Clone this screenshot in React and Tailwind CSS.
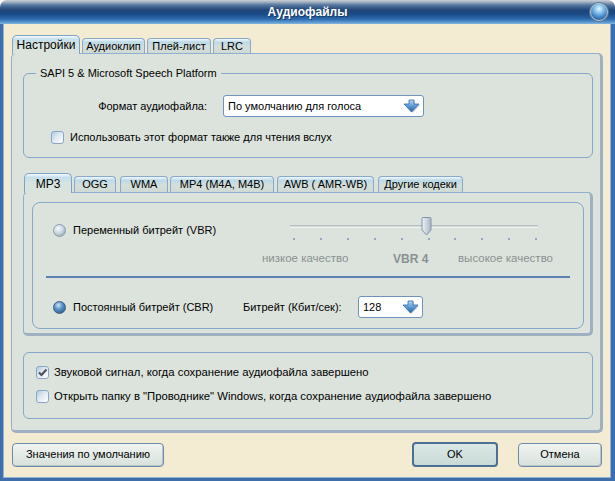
import React from 'react';

const SANS = "font-['Liberation_Sans',Arial,sans-serif]";
const NARROW = "font-['Liberation_Sans_Narrow','Arial_Narrow','Liberation_Sans',sans-serif]";

function DropArrow() {
  return (
    <svg width="17" height="14" viewBox="0 0 17 14">
      <defs>
        <linearGradient id="da" x1="0" y1="0" x2="0" y2="1">
          <stop offset="0" stopColor="#b9dcf7" />
          <stop offset="0.5" stopColor="#5d9ad6" />
          <stop offset="1" stopColor="#2a5f9e" />
        </linearGradient>
      </defs>
      <polygon points="6,1 11,1 11,5 16,5 8.5,13 1,5 6,5" fill="#6b7d8e" opacity="0.35" transform="translate(1,1)" />
      <polygon points="6,1 11,1 11,5 16,5 8.5,13 1,5 6,5" fill="url(#da)" stroke="#2f6aa8" strokeWidth="0.8" />
    </svg>
  );
}

function Select({ value, className }) {
  return (
    <div className={`flex items-center h-[22px] bg-white border border-[#6f93bd] rounded-[3px] pl-[4px] pr-[3px] ${className}`}>
      <span className="flex-1 truncate">{value}</span>
      <DropArrow />
    </div>
  );
}

function Checkbox({ checked }) {
  return (
    <span className="flex shrink-0 items-center justify-center w-[13px] h-[13px] rounded-[3px] border border-[#8aa6c6] bg-[linear-gradient(135deg,#b3cbe2_0%,#dfe9f2_45%,#ffffff_100%)]">
      {checked && (
        <svg width="11" height="11" viewBox="0 0 11 11">
          <path d="M2 5.5 L4.5 8 L9.5 2.5" fill="none" stroke="#4a4f55" strokeWidth="2" />
        </svg>
      )}
    </span>
  );
}

function Radio({ checked }) {
  return checked ? (
    <span className="shrink-0 w-[13px] h-[13px] rounded-full border border-[#3d5d7e] bg-[radial-gradient(circle_at_40%_30%,#cde6f8_0%,#5a93c6_40%,#22507c_100%)]" />
  ) : (
    <span className="shrink-0 w-[13px] h-[13px] rounded-full border border-[#8a9daf] bg-[radial-gradient(circle_at_38%_32%,#f7fafb_0%,#cdd8e0_45%,#8094a7_100%)]" />
  );
}

function Tab({ label, active, className }) {
  return active ? (
    <div
      className={`relative z-10 -mb-px flex items-center justify-center border border-b-0 border-[#7fa3c8] rounded-t-[5px] bg-[linear-gradient(to_bottom,#f6fbfd_0%,#c4dfec_18%,#d6e3e0_45%,#dce3dc_100%)] ${className}`}
    >
      {label}
    </div>
  ) : (
    <div
      className={`flex items-center justify-center border border-b-0 border-[#8aa9c9] rounded-t-[4px] bg-[linear-gradient(to_bottom,#f2f9fc_0%,#bcd9e8_22%,#d4dfdb_55%,#d0dad5_100%)] ${className}`}
    >
      {label}
    </div>
  );
}

function Button({ children, className, focused }) {
  return focused ? (
    <div
      className={`flex items-center justify-center h-[25px] border-2 border-[#4c6f94] rounded-[4px] bg-[linear-gradient(to_bottom,#dbe8e6,#c9dad7)] ${className}`}
    >
      {children}
    </div>
  ) : (
    <div
      className={`flex items-center justify-center h-[24px] border border-[#6c8bab] rounded-[4px] bg-[linear-gradient(to_bottom,#f0f4f1,#d8e1dc)] shadow-[inset_-1px_-1px_0_#b8c6c8] ${className}`}
    >
      {children}
    </div>
  );
}

function Slider() {
  const ticks = Array.from({ length: 10 }, (_, i) => 5 + i * 26.9);
  return (
    <div className="relative w-[252px] h-[30px]">
      <div className="absolute left-[2px] right-[2px] top-[10px] h-[3px] bg-[#d2d9d8] border-t border-[#b7c1c4] border-b border-b-[#eef2f1]" />
      {ticks.map((x) => (
        <div
          key={x}
          className="absolute top-[23px] w-[2px] h-[2px] bg-[#93a8bf]"
          style={{ left: Math.round(x) }}
        />
      ))}
      <svg className="absolute left-[133px] top-[2px]" width="11" height="19" viewBox="0 0 11 19">
        <defs>
          <linearGradient id="th" x1="0" y1="0" x2="1" y2="0">
            <stop offset="0" stopColor="#eef3f6" />
            <stop offset="1" stopColor="#a6b6c5" />
          </linearGradient>
        </defs>
        <path d="M1 1.5 Q1 0.5 2 0.5 H9 Q10 0.5 10 1.5 V13 L5.5 18 L1 13 Z" fill="url(#th)" stroke="#8195aa" />
      </svg>
    </div>
  );
}

export default function App() {
  return (
    <div className={`w-[615px] h-[481px] flex flex-col text-[11px] text-black ${SANS}`}>
      {/* Title bar */}
      <div className="relative h-[24px] shrink-0 rounded-t-[7px] bg-[linear-gradient(to_bottom,#c9d0d6_0px,#a2b1c0_2px,#56779e_5px,#1f4679_10px,#1b4a85_14px,#2c69ad_19px,#5795cf_22px,#86b5de_24px)] flex items-center justify-center">
        <span className="text-white font-bold text-[12px] [text-shadow:1px_1px_0_#163a66]">Аудиофайлы</span>
        <span className="absolute right-[7px] top-[3px] w-[18px] h-[18px] rounded-full border border-[#b9c7d2] bg-[radial-gradient(circle_at_50%_30%,#e6f6ff_0%,#8ac4ee_30%,#3a7cc0_65%,#1d4a80_100%)] shadow-[0_0_0_1px_#5a7896]" />
      </div>

      {/* Body */}
      <div className="flex-1 flex flex-col bg-[#f4ecd2] border-l-[3px] border-r-[4px] border-b-[3px] border-[#3f6fab] shadow-[inset_1px_0_0_#8fb2da,inset_-1px_0_0_#8fb2da,inset_0_-1px_0_#8fb2da] pl-[8px] pr-[8px] pt-[11px]">
        {/* Top tabs */}
        <div className="flex items-end gap-[2px] ml-[1px] h-[18px]">
          <Tab active label="Настройки" className="w-[68px] h-[19px] text-[12px]" />
          <Tab label="Аудиоклип" className="w-[63px] h-[15px]" />
          <Tab label="Плей-лист" className="w-[64px] h-[15px]" />
          <Tab label="LRC" className="w-[38px] h-[15px]" />
        </div>

        {/* Main panel */}
        <div className="h-[380px] flex flex-col bg-[#dce3dc] border-l border-t border-[#8fb0d2] border-r-[3px] border-b-[3px] border-r-[#9eb0c2] border-b-[#9eb0c2] rounded-[5px] pl-[11px] pr-[7px]">
          {/* SAPI group */}
          <fieldset className="mt-[11px] border border-[#86a6ca] rounded-[6px] pb-[12px]">
            <legend className="ml-[12px] px-[4px] leading-[16px] text-[11px]">SAPI 5 &amp; Microsoft Speech Platform</legend>
            <div className="flex items-center mt-[14px]">
              <span className="w-[183px] text-right">Формат аудиофайла:</span>
              <Select value="По умолчанию для голоса" className="ml-[16px] w-[201px]" />
            </div>
            <div className="flex items-center h-[16px] mt-[12px] pl-[27px] gap-[6px]">
              <Checkbox />
              <span>Использовать этот формат также для чтения вслух</span>
            </div>
          </fieldset>

          {/* Codec tabs */}
          <div className="flex items-end ml-[1px] mt-[15px] h-[19px]">
            <Tab active label="MP3" className="w-[48px] h-[20px] text-[12px]" />
            <Tab label="OGG" className="w-[42px] h-[16px] ml-[2px]" />
            <Tab label="WMA" className="w-[48px] h-[16px] ml-[4px]" />
            <Tab label="MP4 (M4A, M4B)" className="w-[104px] h-[16px] ml-[2px]" />
            <Tab label="AWB ( AMR-WB)" className="w-[97px] h-[16px] ml-[3px]" />
            <Tab label="Другие кодеки" className="w-[85px] h-[16px] ml-[4px]" />
          </div>

          <div className="h-[144px] bg-[#dce3dc] border-l border-t border-[#8fb0d2] border-r-[3px] border-b-[3px] border-r-[#9eb0c2] border-b-[#9eb0c2] rounded-[5px] pl-[8px] pr-[6px] pt-[9px]">
            <div className="h-[127px] border border-[#86a6ca] rounded-[8px]">
              {/* VBR row */}
              <div className="flex items-center h-[30px] mt-[12px]">
                <div className="w-[255px] flex items-center gap-[7px] pl-[20px]">
                  <Radio />
                  <span>Переменный битрейт (VBR)</span>
                </div>
                <Slider />
              </div>
              <div className="flex items-center h-[16px] mt-[6px] pl-[229px] text-[#8a9192] text-[11.5px]">
                <span className="w-[131px]">низкое качество</span>
                <span className="w-[65px] font-bold text-[12px]">VBR 4</span>
                <span>высокое качество</span>
              </div>
              <div className="mx-[13px] mt-[9px] h-[2px] bg-[#5b80b3]" />
              {/* CBR row */}
              <div className="flex items-center h-[22px] mt-[18px] pl-[20px]">
                <Radio checked />
                <span className="ml-[7px] w-[170px]">Постоянный битрейт (CBR)</span>
                <span className="w-[115px]">Битрейт (Кбит/сек):</span>
                <Select value="128" className="w-[65px]" />
              </div>
            </div>
          </div>

          {/* Notification group */}
          <div className={`mt-[16px] h-[67px] border border-[#86a6ca] rounded-[6px] pl-[12px] pt-[13px] flex flex-col gap-[11px] text-[11.3px] ${NARROW}`}>
            <div className="flex items-center h-[13px] gap-[5px]">
              <Checkbox checked />
              <span>Звуковой сигнал, когда сохранение аудиофайла завершено</span>
            </div>
            <div className="flex items-center h-[13px] gap-[5px]">
              <Checkbox />
              <span>Открыть папку в "Проводнике" Windows, когда сохранение аудиофайла завершено</span>
            </div>
          </div>
        </div>

        {/* Buttons */}
        <div className={`flex items-center mt-[9px] ml-[1px] text-[11px] ${NARROW}`}>
          <Button className="w-[152px]">Значения по умолчанию</Button>
          <Button focused className="w-[86px] ml-auto">OK</Button>
          <Button className="w-[84px] ml-[20px] mr-[1px]">Отмена</Button>
        </div>
      </div>
    </div>
  );
}
